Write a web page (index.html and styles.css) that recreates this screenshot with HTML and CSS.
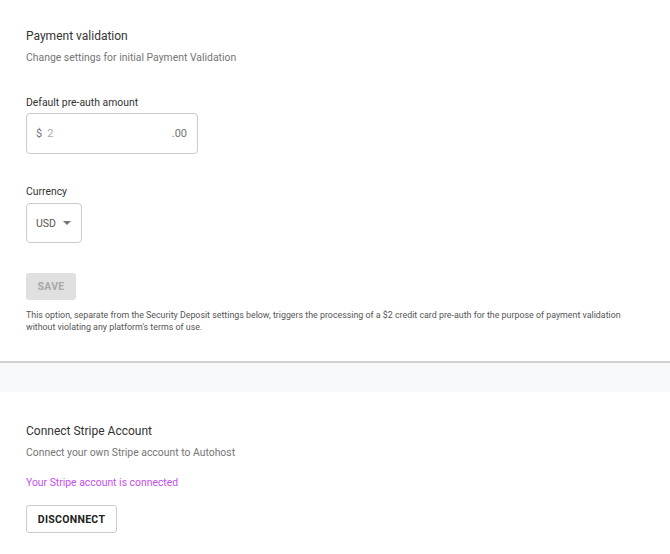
FILE: index.html
```html
<!DOCTYPE html>
<html>
<head>
<meta charset="utf-8">
<link rel="stylesheet" href="styles.css">
</head>
<body>
<section class="section first">
  <h2 class="title">Payment validation</h2>
  <p class="subtitle">Change settings for initial Payment Validation</p>

  <div class="field amount-field">
    <label class="label">Default pre-auth amount</label>
    <div class="input-box">
      <span class="prefix">$</span>
      <span class="value">2</span>
      <span class="suffix">.00</span>
    </div>
  </div>

  <div class="field currency-field">
    <label class="label">Currency</label>
    <div class="select-box">
      <span class="select-value">USD</span>
      <svg class="caret" width="8" height="4" viewBox="0 0 8 4"><path d="M0 0h8L4 4z" fill="#757575"/></svg>
    </div>
  </div>

  <button class="btn btn-disabled">SAVE</button>
  <p class="help">This option, separate from the Security Deposit settings below, triggers the processing of a $2 credit card pre-auth for the purpose of payment validation without violating any platform's terms of use.</p>
</section>

<div class="divider"></div>
<div class="band"></div>

<section class="section second">
  <h2 class="title">Connect Stripe Account</h2>
  <p class="subtitle">Connect your own Stripe account to Autohost</p>
  <p class="status">Your Stripe account is connected</p>
  <button class="btn btn-outline">DISCONNECT</button>
</section>
</body>
</html>
```

FILE: styles.css
```css
* { box-sizing: border-box; }
html, body { margin: 0; padding: 0; background: #fff; }
body { font-family: Roboto, "Noto Sans", sans-serif; color: #333; }

.section { padding: 0 26px; display: flex; flex-direction: column; align-items: flex-start; }
.section.first { padding-top: 28px; padding-bottom: 28px; }
.section.second { padding-top: 31px; }

.title { margin: 0; font-size: 12px; font-weight: 400; line-height: 16px; color: #333; }
.subtitle { margin: 7px 0 0; font-size: 10.4px; line-height: 14px; color: #757575; }

.field { display: flex; flex-direction: column; }
.amount-field { margin-top: 31px; }
.currency-field { margin-top: 31px; }
.label { font-size: 10.4px; line-height: 14px; color: #333; margin-bottom: 3px; }
.currency-field .label { margin-bottom: 4px; }

.input-box {
  width: 172px; height: 41px; border: 1px solid #ccc; border-radius: 4px;
  display: flex; align-items: center; padding: 0 10px 0 9px; font-size: 11px;
}
.prefix { color: #757575; }
.value { color: #aaa; margin-left: 5px; flex: 1; }
.suffix { color: #757575; }

.select-box {
  width: 56px; height: 40px; border: 1px solid #ccc; border-radius: 4px;
  display: flex; align-items: center; padding: 0 0 0 9px; gap: 7px; font-size: 10.5px; color: #555;
}
.caret { display: block; }

.btn { font-family: Roboto, "Noto Sans", sans-serif; font-weight: 700; font-size: 10.5px; letter-spacing: 0.3px; border-radius: 3px; cursor: pointer; }
.btn-disabled {
  margin-top: 30px; width: 50px; height: 27px; border: none; background: #e0e0e0; color: #a8a8a8; padding: 0;
}
.help { margin: 9px 0 0; font-size: 8.85px; line-height: 12px; color: #555; }

.divider { height: 2px; background: #d0d0d0; }
.band { height: 29px; background: #f8f9fa; }

.status { margin: 16px 0 0; font-size: 10.4px; line-height: 14px; color: #c24ef0; }
.btn-outline {
  margin-top: 15px; width: 91px; height: 28px; background: #fff; border: 1px solid #ccc; color: #222; padding: 0;
}
```
